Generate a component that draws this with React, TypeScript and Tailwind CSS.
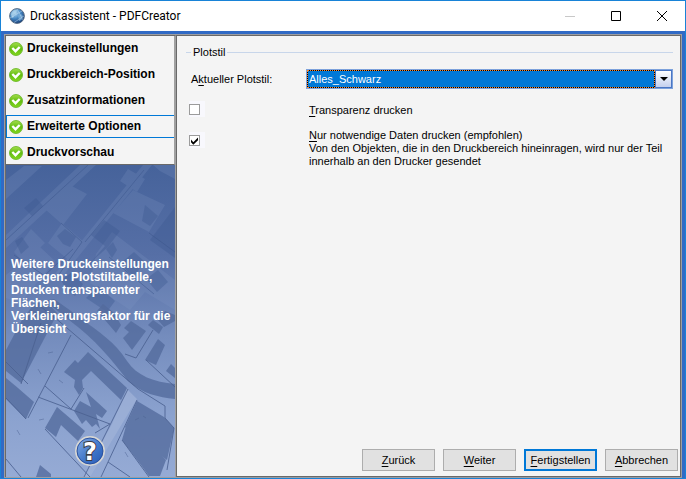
import { useState } from "react";
import type { ReactNode } from "react";

const steps = [
  "Druckeinstellungen",
  "Druckbereich-Position",
  "Zusatzinformationen",
  "Erweiterte Optionen",
  "Druckvorschau",
];

function GlobeIcon() {
  return (
    <svg viewBox="0 0 16 16" className="size-4 shrink-0" aria-hidden="true">
      <defs>
        <radialGradient id="globe" cx="35%" cy="28%" r="75%">
          <stop offset="0" stopColor="#b9dcf3" />
          <stop offset=".5" stopColor="#4b8cc6" />
          <stop offset="1" stopColor="#153f7c" />
        </radialGradient>
      </defs>
      <circle cx="8" cy="8" r="7.4" fill="url(#globe)" stroke="#56697f" strokeWidth=".9" />
      <path d="M2 6 5 2.5 8 2 7 5 4.500 7 5 9 3 10Z" fill="#a9d0ea" opacity=".75" />
      <path d="M9 7.500 12 6 14 8 12.500 12 10 13 9.500 10Z" fill="#7fb2dc" opacity=".7" />
      <path d="M1 10 13 3M5 14.500 15 8M8 1 14 12" stroke="#d2e8f8" strokeWidth=".6" opacity=".7" />
    </svg>
  );
}

function DoneIcon() {
  return (
    <svg viewBox="0 0 14 14" className="size-3.5 shrink-0" aria-hidden="true">
      <defs>
        <linearGradient id="done" x1="0" y1="0" x2="0" y2="1">
          <stop offset="0" stopColor="#a5df4c" />
          <stop offset=".5" stopColor="#62bd10" />
          <stop offset="1" stopColor="#84d820" />
        </linearGradient>
      </defs>
      <circle cx="7" cy="7" r="6.500" fill="url(#done)" stroke="#62b31c" strokeWidth=".8" />
      <path d="M3.300 6 6.500 9.200 10.700 5" fill="none" stroke="#fff" strokeWidth="2.400" />
    </svg>
  );
}

function MapBackdrop() {
  return (
    <svg
      viewBox="6 165 169 312"
      preserveAspectRatio="xMidYMid slice"
      className="absolute inset-0 size-full"
      aria-hidden="true"
    >
      <defs>
        <linearGradient id="ground" x1="0" y1="0" x2="0" y2="1">
          <stop offset="0" stopColor="#45629a" />
          <stop offset=".3" stopColor="#566fa6" />
          <stop offset=".55" stopColor="#748cbd" />
          <stop offset=".8" stopColor="#8ba2cf" />
          <stop offset="1" stopColor="#96abd5" />
        </linearGradient>
      </defs>
      <rect x="0" y="160" width="180" height="320" fill="url(#ground)" />
      <g fill="#8299c6" opacity=".22">
        <path d="M6 235 80 165 96 165 6 248Z" />
        <path d="M54 275 143 165 152 165 62 277Z" />
        <path d="M113 213 133 190 165 205 149 232Z" />
        <path d="M46 210 66 183 87 194 63 225Z" />
        <path d="M14 252 31 229 45 243 24 263Z" />
        <path d="M120 181 128 169 145 179 137 192Z" />
        <path d="M96 254 112 232 149 260 175 280V310L145 292 130 310 90 283Z" />
        <path d="M48 243 62 223 85 243 71 262Z" />
        <path d="M6 275 40 247 55 261 20 303 6 298Z" />
        <path d="M153 165H175V179L160 171ZM6 180 24 166H42L6 199Z" />
      </g>
      <g fill="#3d5991" opacity=".38">
        <path d="M57 236 65 229 76 237 70 247 63 244Z" />
        <path d="M15 241 22 237 29 247 21 254Z" />
        <path d="M150 240 175 207V258Z" />
        <path d="M106 249 113 242 117 250 112 258Z" />
        <path d="M61 280 71 273 83 284 75 296 66 289Z" />
        <path d="M91 262 105 246 91 235 104 220 120 231 108 247Z" />
        <path d="M121 263 134 252 145 262 134 276 127 271Z" />
        <path d="M146 279 158 270 168 282 157 292Z" />
        <path d="M86 298 98 286 115 301 107 312Z" />
        <path d="M24 208 36 198 43 206 32 216Z" />
        <path d="M145 205 158 216 150 226 142 221Z" />
      </g>
      <g stroke="#3e588e" strokeWidth=".9" fill="none" opacity=".6">
        <path d="M6 240 88 165M61 223 82 242 55 280M85 242 144 170M109 257 154 294M149 233 175 252M14 255 45 276M45 275 73 249" />
      </g>
      <g fill="#536b9d" opacity=".78">
        <path d="M22 320 34 304 46 301 57 313 54 320 21 383 6 371V350Z" />
        <path d="M6 378 18 388 34 402 26 419 6 399Z" />
        <path d="M44 301C56 309 63 315 69 320 96 340 112 360 128 381 143 394 158 397 175 399V384C154 382 137 376 127 361 115 342 99 332 83 320 74 313 64 306 54 299Z" />
        <path d="M88 352 127 388 121 400 91 371 82 380 83 388 79 395 74 387 75 380 64 372 75 360 78 363Z" />
        <path d="M86 392 107 411 102 418 96 414 100 429 96 424 92 427 86 420 82 424 74 411 80 401 91 407Z" />
        <path d="M57 407 85 431 78 441 61 425 56 437 45 428Z" />
        <path d="M137 401 164 417 174 428 167 460 144 443 125 427Z" />
        <path d="M126 426 157 450 166 460 160 476H149L141 465 122 440Z" />
        <path d="M97 311 103 304 114 313 121 325 116 333 105 320ZM123 338 129 332 124 328 131 321 146 331 132 350Z" />
        <path d="M145 360 158 339 165 345 156 365ZM166 371 171 364 175 368V378Z" />
        <path d="M36 477 40 465 51 474V477ZM158 320 165 311 175 315V321L164 327Z" />
        <path d="M153 320 148 325 159 334 163 327Z" />
      </g>
      <path d="M127 389 137 399 90 477H83L112 424Z" fill="#a1b3d9" opacity=".7" />
      <g stroke="#4c6292" strokeWidth="1" fill="none" opacity=".85">
        <path d="M6 362 28 384M41 323 21 384M71 335 28 418M40 306 60 322 138 389 165 406V418L174 428 167 470M45 386 71 409 84 388M38 397 110 424M45 429 90 477M128 389 84 477M137 400 101 477M6 398 26 419M6 459 21 477M108 462 130 477M125 354 136 358 153 330M146 360 175 387M122 440 149 477M95 433 110 424" />
        <path d="m38 369 3 5M59 380l4 3M17 430l3 5M125 452l3 5M135 420l4-2M143 416l3 2M48 353l5-1M39 420l5-1" opacity=".55" />
      </g>
    </svg>
  );
}

function HelpButton() {
  return (
    <button type="button" aria-label="Hilfe" className="size-8">
      <svg viewBox="0 0 32 32" className="size-8" aria-hidden="true">
        <defs>
          <linearGradient id="help" x1="0" y1="0" x2="1" y2="1">
            <stop offset="0" stopColor="#8bb0e6" />
            <stop offset=".5" stopColor="#467ccc" />
            <stop offset="1" stopColor="#2456b4" />
          </linearGradient>
        </defs>
        <circle cx="16" cy="16" r="14" fill="url(#help)" stroke="#d6d6d4" strokeWidth="2" />
        <circle cx="16" cy="16" r="13" fill="none" stroke="#24499a" strokeWidth=".9" />
        <text
          x="16"
          y="25"
          textAnchor="middle"
          className="font-['DejaVu_Sans',sans-serif] text-[24px] font-bold"
          fill="#fff"
          stroke="#3b3b45"
          strokeWidth="2"
          paintOrder="stroke"
        >
          ?
        </text>
      </svg>
    </button>
  );
}

function CheckBox({ id, initial }: { id: string; initial: boolean }) {
  const [on, setOn] = useState(initial);
  return (
    <span className="relative flex size-4 items-center bg-[#f8f8fd]">
      <input
        id={id}
        type="checkbox"
        checked={on}
        onChange={() => setOn(!on)}
        className="size-[11px] appearance-none border border-[#9b9b9b] bg-white"
      />
      {on && (
        <svg viewBox="0 0 9 9" className="pointer-events-none absolute left-px size-[9px]" aria-hidden="true">
          <path d="M1 3.500 3.300 6.200 8 1.500V4.200L3.300 8.700 1 6.200Z" fill="#000" />
        </svg>
      )}
    </span>
  );
}

function WizardButton({ children, primary }: { children: ReactNode; primary?: boolean }) {
  return (
    <button
      type="button"
      className={
        primary
          ? "h-[22px] w-[73px] border-2 border-[#0078d7] bg-[#e1e1e1]"
          : "h-[22px] w-[73px] border border-[#adadad] bg-[#e1e1e1]"
      }
    >
      {children}
    </button>
  );
}

const key = "underline underline-offset-2";

export default function App() {
  return (
    <div className="flex h-screen flex-col border border-[#1883d7] bg-[#316ac5] font-['Liberation_Sans',Arial,sans-serif] text-[11px] leading-[13px] text-black">
      <header className="flex h-[30px] shrink-0 items-center bg-white pl-2">
        <GlobeIcon />
        <h1 className="ml-[5px] flex-1 font-[Roboto,sans-serif] text-[12px] leading-4">
          Druckassistent - PDFCreator
        </h1>
        <button type="button" aria-label="Minimieren" className="flex h-full w-[46px] items-center justify-center">
          <svg viewBox="0 0 10 10" className="size-2.5"><path d="M0 5.500H10" stroke="#c8c8c8" /></svg>
        </button>
        <button type="button" aria-label="Maximieren" className="flex h-full w-[46px] items-center justify-center">
          <svg viewBox="0 0 10 10" className="size-2.5"><path d="M.5.5h9v9h-9Z" fill="none" stroke="#000" /></svg>
        </button>
        <button type="button" aria-label="Schließen" className="flex h-full w-[46px] items-center justify-center">
          <svg viewBox="0 0 10 10" className="size-2.5"><path d="M0 0 10 10M10 0 0 10" stroke="#000" /></svg>
        </button>
      </header>

      <div className="mx-[3px] mt-[3px] flex min-h-0 flex-1 border border-[#9d9da1]">
        <aside className="flex w-[171px] shrink-0 flex-col border-t border-r border-l border-t-[#696969] border-r-[#a0a0a0] border-l-[#696969]">
          <nav className="border-r border-b border-r-[#a0a0a0] border-b-[#696969] bg-[#f4f4f4] pt-px">
            <ul className="flex flex-col gap-[3px]">
              {steps.map((step, i) => (
                <li key={step}>
                  <a
                    href="#"
                    aria-current={i === 3 ? "step" : undefined}
                    className={
                      i === 3
                        ? "flex h-[23px] items-center gap-1 border border-r-0 border-[#0078d7] pl-0.5 text-[12px] font-bold whitespace-nowrap"
                        : "flex h-[23px] items-center gap-1 pl-[3px] text-[12px] font-bold whitespace-nowrap"
                    }
                  >
                    <DoneIcon />
                    {step}
                  </a>
                </li>
              ))}
            </ul>
          </nav>
          <div className="relative flex min-h-0 flex-1 flex-col overflow-hidden">
            <MapBackdrop />
            <p className="relative mt-[93px] pl-[5px] text-[12px] font-bold text-white">
              Weitere Druckeinstellungen festlegen: Plotstiltabelle, Drucken transparenter Flächen, Verkleinerungsfaktor für die Übersicht
            </p>
            <div className="relative mt-auto flex justify-center pr-0.5 pb-2.5">
              <HelpButton />
            </div>
          </div>
        </aside>

        <main className="flex min-w-0 flex-1 flex-col border border-[#696969] bg-[#f4f4f4]">
          <fieldset className="mt-2.5 mr-[7px] ml-[9px] border-t border-[#c8d6ea]">
            <legend className="ml-[5px] px-0.5">Plotstil</legend>
            <div className="mt-2.5 grid grid-cols-[115px_1fr] items-center pl-[5px]">
              <label htmlFor="plotstyle">
                A<span className={key}>k</span>tueller Plotstil:
              </label>
              <div className="relative flex h-5 border border-[#7da2dc] bg-[#f4f4f4]">
                <select
                  id="plotstyle"
                  className="flex-1 appearance-none border border-dotted border-[#ff8728] pl-px text-white outline-none [background:linear-gradient(#0078d7,#0078d7)_padding-box,#000]"
                >
                  <option>Alles_Schwarz</option>
                </select>
                <span className="pointer-events-none flex w-[17px] items-center justify-center border border-[#4a76c4] bg-linear-to-b from-white to-[#c4d0ee]">
                  <svg viewBox="0 0 8 4" className="h-1 w-2"><path d="M0 0H8L4 4Z" fill="#000" /></svg>
                </span>
              </div>
            </div>
            <div className="mt-3 grid grid-cols-[120px_1fr] pl-[3px]">
              <CheckBox id="transparency" initial={false} />
              <label htmlFor="transparency" className="pt-[3px]">
                <span className={key}>T</span>ransparenz drucken
              </label>
            </div>
            <div className="mt-3 grid grid-cols-[120px_1fr] pl-[3px]">
              <span className="pt-[3px]">
                <CheckBox id="needed" initial />
              </span>
              <label htmlFor="needed">
                <span className={key}>N</span>ur notwendige Daten drucken (empfohlen)
                <br />
                Von den Objekten, die in den Druckbereich hineinragen, wird nur der Teil innerhalb an den Drucker gesendet
              </label>
            </div>
          </fieldset>
          <footer className="mt-auto flex justify-end gap-2 pr-0.5 pb-[5px]">
            <WizardButton><span className={key}>Z</span>urück</WizardButton>
            <WizardButton><span className={key}>W</span>eiter</WizardButton>
            <WizardButton primary><span className={key}>F</span>ertigstellen</WizardButton>
            <WizardButton><span className={key}>A</span>bbrechen</WizardButton>
          </footer>
        </main>
      </div>
    </div>
  );
}
